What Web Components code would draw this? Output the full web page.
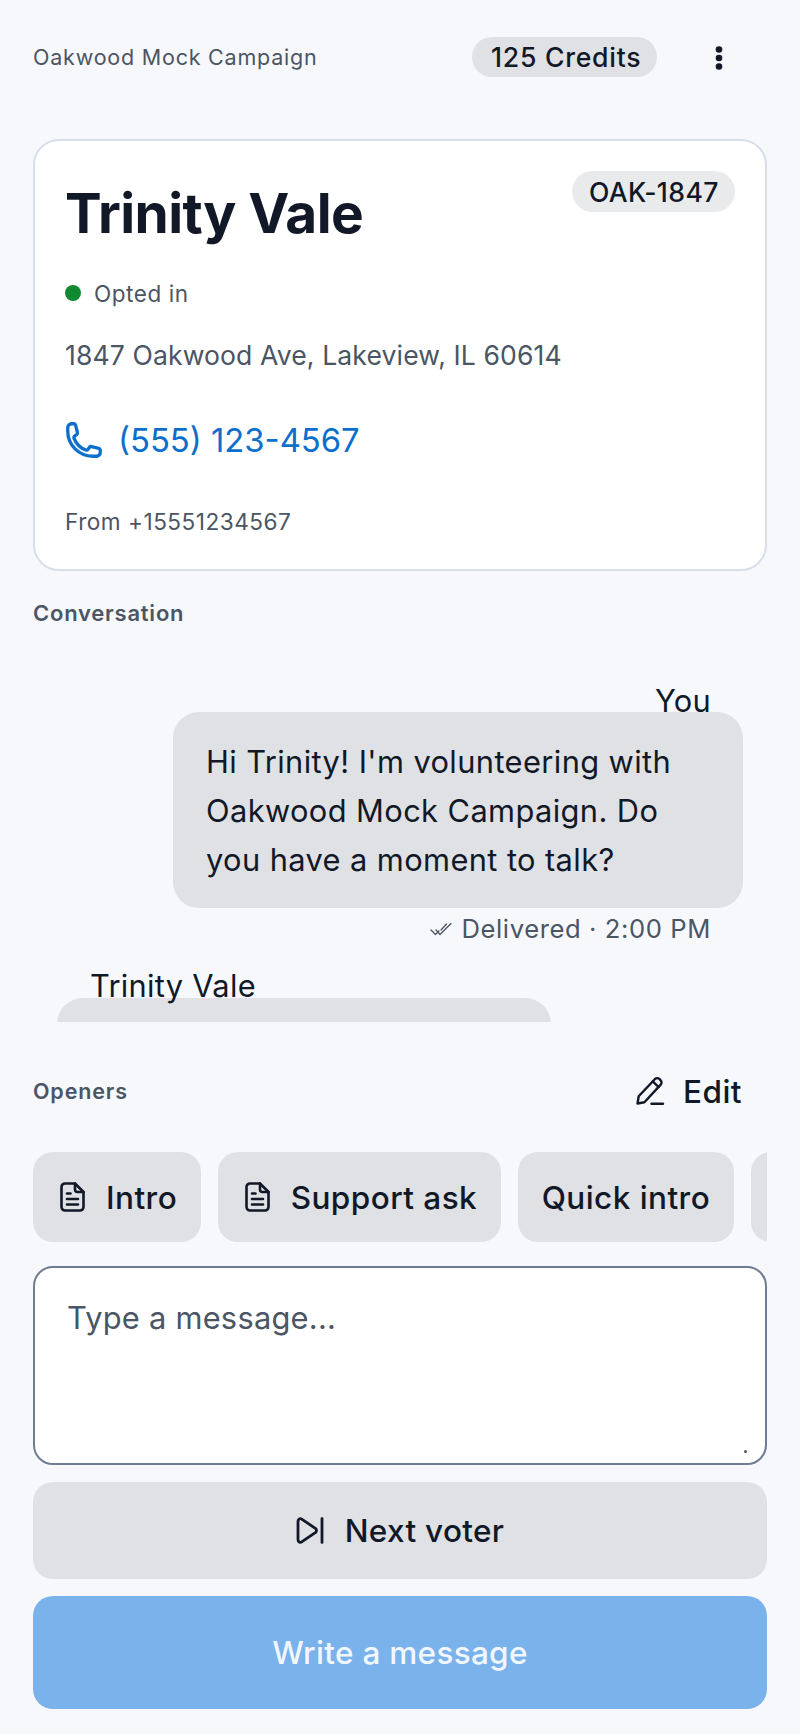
<!DOCTYPE html>
<html lang="en">
<head>
<meta charset="utf-8">
<title>Oakwood Mock Campaign</title>
<style>
  html, body { margin: 0; padding: 0; background: #f6f8fc; }
  body { font-family: Inter, "Noto Sans", sans-serif; color: #111827; -webkit-font-smoothing: antialiased; }
</style>
</head>
<body>
<voter-screen>
  <top-bar slot="top" campaign="Oakwood Mock Campaign" credits="125 Credits"></top-bar>
  <contact-card slot="top" name="Trinity Vale" code="OAK-1847" status="Opted in"
    address="1847 Oakwood Ave, Lakeview, IL 60614" phone="(555) 123-4567" from="From +15551234567"></contact-card>
  <conversation-pane slot="middle"></conversation-pane>
  <openers-bar slot="bottom"></openers-bar>
  <message-composer slot="bottom" placeholder="Type a message..."></message-composer>
</voter-screen>

<script>
(function () {
  'use strict';

  const ICONS = {
    phone: `<svg width="40" height="40" viewBox="0 0 24 24" fill="none" stroke="#0b6fcb" stroke-width="2" stroke-linecap="round" stroke-linejoin="round"><path d="M2.25 6.75c0 8.284 6.716 15 15 15h2.25a2.25 2.25 0 0 0 2.25-2.25v-1.372c0-.516-.351-.966-.852-1.091l-4.423-1.106c-.44-.11-.902.055-1.173.417l-.97 1.293c-.282.376-.769.542-1.21.38a12.035 12.035 0 0 1-7.143-7.143c-.162-.441.004-.928.38-1.21l1.293-.97c.363-.271.527-.734.417-1.173L6.963 3.102a1.125 1.125 0 0 0-1.091-.852H4.5A2.25 2.25 0 0 0 2.25 4.5v2.25Z"/></svg>`,
    doc: `<svg width="25" height="30" viewBox="0 0 25 30" fill="none" stroke="#111827" stroke-width="2.6" stroke-linecap="round" stroke-linejoin="round"><path d="M5 1.5h10l8.5 8.5v15a3.5 3.5 0 0 1-3.5 3.5H5A3.5 3.5 0 0 1 1.5 25V5A3.5 3.5 0 0 1 5 1.5Z"/><path d="M15 1.5v6a2.5 2.5 0 0 0 2.5 2.5h6"/><path d="M7 11.5h3.5M7 17h11M7 22.5h11"/></svg>`,
    pencil: `<svg width="30" height="30" viewBox="0 0 30 30" fill="none" stroke="#111827" stroke-width="2.4" stroke-linecap="round" stroke-linejoin="round"><path d="M2.5 27.5l1.2-7.2L19.8 3.2a3.4 3.4 0 0 1 4.8 0l.9.9a3.4 3.4 0 0 1 0 4.8L9.4 26.3Z"/><path d="M17.8 5.4l5.7 5.6"/><path d="M16.5 27.8h11.5"/></svg>`,
    skip: `<svg width="28" height="27" viewBox="0 0 28 27" fill="none" stroke="#111827" stroke-width="2.8" stroke-linecap="round" stroke-linejoin="round"><path d="M2 4.2c0-2 2.1-3.1 3.7-2.1l13.6 9.2a2.6 2.6 0 0 1 0 4.4L5.7 24.9C4.1 25.9 2 24.8 2 22.8Z"/><path d="M26 1.6v23.8"/></svg>`,
    checks: `<svg width="22" height="14" viewBox="0 0 22 14" fill="none" stroke="#4b5563" stroke-width="1.3" stroke-linecap="round" stroke-linejoin="round"><path d="M1 8l4.5 4.5L9 9"/><path d="M6 8l4 4.5L21 1.5"/><path d="M11 8l5.5-6"/></svg>`,
    kebab: `<svg width="8" height="26" viewBox="0 0 8 26" fill="#111827"><circle cx="4" cy="4.5" r="3.3"/><circle cx="4" cy="13" r="3.3"/><circle cx="4" cy="21.5" r="3.3"/></svg>`
  };

  // small helper so each element stays a template string + open shadow root
  class ShadowEl extends HTMLElement {
    connectedCallback() {
      if (!this.shadowRoot) this.attachShadow({ mode: 'open' });
      this.shadowRoot.innerHTML = this.render();
    }
    attr(name) { return this.getAttribute(name) || ''; }
  }

  class VoterScreen extends ShadowEl {
    render() {
      return `<style>
        :host { display: flex; flex-direction: column; width: 800px; height: 1734px; box-sizing: border-box; padding: 37px 33px 25px; overflow: hidden; background: #f6f8fc; }
        .top, .middle, .bottom { display: block; flex: none; }
      </style>
      <div class="top"><slot name="top"></slot></div>
      <div class="middle"><slot name="middle"></slot></div>
      <div class="bottom"><slot name="bottom"></slot></div>`;
    }
  }

  class TopBar extends ShadowEl {
    render() {
      return `<style>
        :host { display: flex; align-items: center; height: 40px; margin-bottom: 62px; }
        .name { flex: 1; font-size: 21.5px; letter-spacing: .78px; color: #4b5563; }
        .credits { display: flex; align-items: center; width: 185px; height: 40px; box-sizing: border-box; padding-left: 19px; border-radius: 20px; background: #dfe1e5; font-size: 26.6px; font-weight: 450; letter-spacing: .75px; color: #111827; }
        .menu { display: flex; width: 8px; margin: 1px 44px 0 58px; }
      </style>
      <span class="name">${this.attr('campaign')}</span>
      <span class="credits">${this.attr('credits')}</span>
      <span class="menu">${ICONS.kebab}</span>`;
    }
  }

  class ContactCard extends ShadowEl {
    render() {
      return `<style>
        :host { display: block; box-sizing: border-box; height: 432px; padding: 30px 30px 0 30px; border: 2px solid #d9dfe8; border-radius: 26px; background: #fff; }
        .head { display: flex; justify-content: space-between; align-items: flex-start; height: 105px; }
        h1 { margin: 5.5px 0 0; font-size: 55px; line-height: 72px; font-weight: 700; letter-spacing: -.6px; color: #111827; }
        .code { display: flex; align-items: center; width: 163px; height: 41px; box-sizing: border-box; padding-left: 17px; border-radius: 21px; background: #e9eaec; font-size: 26.6px; font-weight: 450; letter-spacing: .4px; color: #111827; }
        .status { display: flex; align-items: center; gap: 13px; height: 34px; font-size: 22.5px; letter-spacing: .55px; color: #4b5563; }
        .dot { width: 16px; height: 16px; border-radius: 50%; background: #0f8a2e; }
        .address { margin-top: 24.5px; height: 40px; line-height: 40px; font-size: 26.6px; letter-spacing: .1px; color: #4b5563; }
        .phone { display: flex; align-items: center; gap: 14px; margin-top: 42px; height: 46px; font-size: 32.8px; color: #0b6fcb; }
        .phone svg { display: block; margin-left: -1px; }
        .from { margin-top: 45px; font-size: 22.6px; line-height: 28px; letter-spacing: .5px; color: #4b5563; }
      </style>
      <div class="head"><h1>${this.attr('name')}</h1><span class="code">${this.attr('code')}</span></div>
      <div class="status"><span class="dot"></span><span>${this.attr('status')}</span></div>
      <div class="address">${this.attr('address')}</div>
      <div class="phone">${ICONS.phone}<span>${this.attr('phone')}</span></div>
      <div class="from">${this.attr('from')}</div>`;
    }
  }

  class ConversationPane extends ShadowEl {
    render() {
      return `<style>
        :host { display: block; height: 425px; margin-top: 26px; overflow: hidden; }
        .label { height: 32px; line-height: 32px; font-size: 22px; font-weight: 600; letter-spacing: .77px; color: #4b5563; }
        .thread { height: 393px; overflow: hidden; padding-top: 53.5px; box-sizing: border-box; }
        .out { display: flex; flex-direction: column; align-items: flex-end; padding-right: 24px; }
        .out .who { margin-right: 32px; margin-bottom: -7px; font-size: 30.8px; line-height: 36px; letter-spacing: .3px; }
        .out .box { width: 570px; height: 196px; box-sizing: border-box; padding: 25px 32px 25px 33px; border-radius: 26px; background: #dfe1e5; font-size: 30.8px; line-height: 49px; letter-spacing: .4px; }
        .meta { display: flex; align-items: center; gap: 9px; margin: 5px 32px 0 0; height: 32px; font-size: 25.6px; letter-spacing: .6px; color: #4b5563; }
        .in { margin: 23px 0 0 24px; }
        .in .who { margin-left: 33px; margin-bottom: -6px; font-size: 30.8px; line-height: 36px; letter-spacing: .3px; }
        .in .box { width: 494px; height: 120px; border-radius: 26px; background: #dfe1e5; }
      </style>
      <div class="label">Conversation</div>
      <div class="thread">
        <div class="out">
          <div class="who">You</div>
          <div class="box">Hi Trinity! I'm volunteering with Oakwood Mock Campaign. Do you have a moment to talk?</div>
          <div class="meta">${ICONS.checks}<span>Delivered · 2:00 PM</span></div>
        </div>
        <div class="in">
          <div class="who">Trinity Vale</div>
          <div class="box"></div>
        </div>
      </div>`;
    }
  }

  class OpenersBar extends ShadowEl {
    render() {
      return `<style>
        :host { display: block; margin-top: 47px; }
        .row { display: flex; justify-content: space-between; align-items: center; height: 44px; padding-right: 25px; }
        .label { font-size: 21.5px; font-weight: 600; letter-spacing: .85px; color: #4b5563; }
        .edit { display: flex; align-items: center; gap: 18px; font-size: 31.5px; font-weight: 500; letter-spacing: .45px; color: #111827; }
        .chips { display: flex; gap: 16.5px; margin-top: 39px; height: 90px; overflow: hidden; }
        .chip { display: flex; align-items: center; gap: 21px; flex: none; box-sizing: border-box; height: 90px; padding: 0 24px 0 27px; border-radius: 20px; background: #dfe1e5; font-size: 31.5px; font-weight: 500; letter-spacing: .45px; color: #111827; }
        .chip.plain { padding: 0 24px; }
        svg { display: block; }
      </style>
      <div class="row">
        <span class="label">Openers</span>
        <span class="edit">${ICONS.pencil}<span>Edit</span></span>
      </div>
      <div class="chips">
        <span class="chip">${ICONS.doc}<span>Intro</span></span>
        <span class="chip">${ICONS.doc}<span>Support ask</span></span>
        <span class="chip plain"><span>Quick intro</span></span>
        <span class="chip plain"><span></span></span>
      </div>`;
    }
  }

  class MessageComposer extends ShadowEl {
    render() {
      return `<style>
        :host { display: block; margin-top: 24px; }
        .input { position: relative; box-sizing: border-box; height: 199px; padding: 30px 32px; border: 2px solid #6f7d93; border-radius: 20px; background: #fff; font-size: 30.8px; line-height: 40px; letter-spacing: .25px; color: #4b5563; }
        .grip { position: absolute; right: 18px; bottom: 10px; width: 3px; height: 3px; border-radius: 50%; background: #4b5563; }
        .btn { display: flex; align-items: center; justify-content: center; box-sizing: border-box; border-radius: 20px; font-size: 31.5px; font-weight: 500; letter-spacing: .3px; }
        .next { gap: 21px; height: 97px; margin-top: 17px; background: #dfe1e5; color: #111827; }
        .send { height: 113px; margin-top: 17px; background: #7ab2ec; color: #f2f7fd; }
        svg { display: block; }
      </style>
      <div class="input">${this.attr('placeholder')}<span class="grip"></span></div>
      <div class="btn next">${ICONS.skip}<span>Next voter</span></div>
      <div class="btn send">Write a message</div>`;
    }
  }

  customElements.define('voter-screen', VoterScreen);
  customElements.define('top-bar', TopBar);
  customElements.define('contact-card', ContactCard);
  customElements.define('conversation-pane', ConversationPane);
  customElements.define('openers-bar', OpenersBar);
  customElements.define('message-composer', MessageComposer);
})();
</script>
</body>
</html>
